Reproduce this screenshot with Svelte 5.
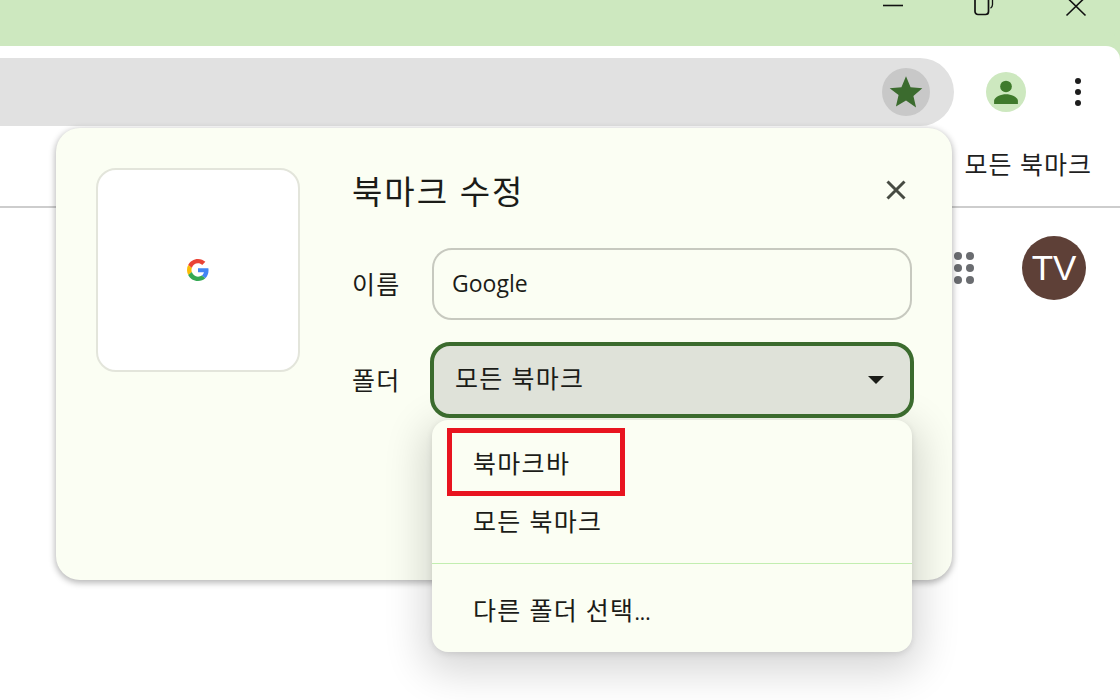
<script>
  let title = '북마크 수정';
  let name = 'Google';
  let folder = '모든 북마크';
</script>

<div class="window">
  <div class="titlebar">
    <svg class="winctl min" width="20" height="10" viewBox="0 0 20 10"><path d="M0 5.500h20" stroke="#111" stroke-width="1.600" /></svg>
    <svg class="winctl restore" width="20" height="16" viewBox="0 0 20 16"><rect x="1" y="-3" width="13.500" height="17.500" rx="3" fill="none" stroke="#111" stroke-width="1.700" /><path d="M18.500 -1v5.500c0 1.800-.8 3-2 3.700" fill="none" stroke="#111" stroke-width="1.300" /></svg>
    <svg class="winctl close" width="20" height="16" viewBox="0 0 20 16"><path d="M0.500 15.500L19.500 -3M0.500 -3L19.500 15.500" stroke="#111" stroke-width="1.600" /></svg>
  </div>

  <div class="toolbar">
    <div class="omnibox">
      <span class="star-btn">
        <svg width="40" height="40" viewBox="0 0 24 24"><path d="M12 2.600l2.750 6.500 7.050.6-5.350 4.650 1.600 6.900L12 17.050 5.950 20.750l1.600-6.900L2.200 9.700l7.050-.6z" fill="#3b6b2e" /></svg>
      </span>
    </div>
    <span class="profile">
      <svg width="26" height="26" viewBox="0 0 24 24"><circle cx="12" cy="6.900" r="5.400" fill="#3f7a2c" /><path d="M1 23v-3c0-3.500 6.600-6 11-6s11 2.500 11 6v3z" fill="#3f7a2c" /></svg>
    </span>
    <span class="kebab"><i></i><i></i><i></i></span>
  </div>

  <div class="bookmarks">
    <span class="all">모든 북마크</span>
  </div>

  <div class="page">
    <span class="apps">
      {#each Array(9) as _}
        <i></i>
      {/each}
    </span>
    <span class="avatar">TV</span>
  </div>

  <div class="dialog">
    <div class="preview">
      <svg width="22" height="22" viewBox="0 0 48 48">
        <path fill="#EA4335" d="M24 9.500c3.540 0 6.710 1.220 9.210 3.600l6.850-6.850C35.900 2.380 30.470 0 24 0 14.620 0 6.510 5.380 2.560 13.220l7.980 6.190C12.430 13.720 17.740 9.500 24 9.500z" />
        <path fill="#4285F4" d="M46.980 24.550c0-1.570-.15-3.090-.38-4.550H24v9.020h12.940c-.58 2.960-2.260 5.480-4.780 7.180l7.730 6c4.510-4.180 7.090-10.360 7.090-17.650z" />
        <path fill="#FBBC05" d="M10.530 28.590c-.48-1.450-.76-2.990-.76-4.590s.27-3.140.76-4.590l-7.980-6.190C.92 16.460 0 20.120 0 24c0 3.880.92 7.540 2.560 10.780l7.970-6.190z" />
        <path fill="#34A853" d="M24 48c6.480 0 11.930-2.130 15.890-5.810l-7.730-6c-2.150 1.450-4.920 2.300-8.160 2.300-6.260 0-11.570-4.220-13.470-9.910l-7.980 6.190C6.510 42.620 14.620 48 24 48z" />
      </svg>
    </div>
    <div class="form">
      <div class="head">
        <h2>{title}</h2>
        <svg class="x" width="22" height="22" viewBox="0 0 22 22"><path d="M2.500 2.500l17 17M19.500 2.500l-17 17" stroke="#474b42" stroke-width="3" /></svg>
      </div>
      <div class="row name-row">
        <span class="label">이름</span>
        <div class="input">{name}</div>
      </div>
      <div class="row">
        <span class="label">폴더</span>
        <div class="select">
          <span class="value">{folder}</span>
          <svg width="16" height="8" viewBox="0 0 16 8"><path d="M0 0h16L8 8z" fill="#1b1c18" /></svg>
        </div>
      </div>
    </div>
  </div>

  <div class="menu">
    <div class="item first">북마크바</div>
    <div class="item">모든 북마크</div>
    <div class="sep"></div>
    <div class="item last">다른 폴더 선택<span class="dots">...</span></div>
  </div>
  <div class="highlight"></div>
</div>

<style>
  :global(body) {
    margin: 0;
    background: #fff;
  }

  .window {
    position: relative;
    width: 1120px;
    height: 700px;
    overflow: hidden;
    display: flex;
    flex-direction: column;
    background: #fff;
    font-family: "Noto Sans", "Noto Sans CJK KR", sans-serif;
    color: #1b1c18;
  }

  .titlebar {
    height: 46px;
    flex: none;
    background: #cde8bf;
    display: flex;
    align-items: flex-start;
    overflow: hidden;
  }

  .winctl {
    display: block;
    overflow: visible;
  }

  .min {
    margin: 0 0 0 883px;
  }

  .restore {
    margin-left: 71px;
  }

  .close {
    margin-left: 72px;
  }

  .toolbar {
    height: 80px;
    flex: none;
    background: #fff;
    border-top-right-radius: 14px;
    display: flex;
    align-items: flex-start;
    box-shadow: 0 -14px 0 0 #cde8bf;
  }

  .omnibox {
    width: 994px;
    height: 68px;
    margin: 12px 0 0 -40px;
    flex: none;
    background: #e1e1e1;
    border-radius: 34px;
    display: flex;
    align-items: center;
    justify-content: flex-end;
    padding-right: 24px;
    box-sizing: border-box;
  }

  .star-btn {
    width: 48px;
    height: 48px;
    border-radius: 50%;
    background: #c8c8c8;
    display: flex;
    align-items: center;
    justify-content: center;
  }

  .profile {
    width: 40px;
    height: 40px;
    margin: 26px 0 0 32px;
    border-radius: 50%;
    background: #cde8bf;
    display: flex;
    align-items: center;
    justify-content: center;
  }

  .kebab {
    display: flex;
    flex-direction: column;
    gap: 5px;
    margin: 32px 0 0 49px;
  }

  .kebab i {
    width: 6px;
    height: 6px;
    border-radius: 50%;
    background: #1d1d1d;
  }

  .bookmarks {
    flex: none;
    height: 58px;
    border-bottom: 2px solid #cdcdcd;
    display: flex;
    justify-content: flex-end;
    padding: 22px 28px 0 0;
  }

  .all {
    font-size: 25px;
    letter-spacing: 1px;
    line-height: 32px;
    color: #1f1f1f;
  }

  .page {
    display: flex;
    align-items: center;
    justify-content: flex-end;
    padding: 28px 34px 0 0;
    gap: 48px;
  }

  .apps {
    display: grid;
    grid-template-columns: repeat(3, 8px);
    gap: 4px;
  }

  .apps i {
    width: 8px;
    height: 8px;
    border-radius: 50%;
    background: #6a6c70;
  }

  .avatar {
    width: 64px;
    height: 64px;
    border-radius: 50%;
    background: #5e4037;
    color: #fff;
    font-family: "Liberation Sans", sans-serif;
    font-size: 35px;
    line-height: 64px;
    text-align: center;
  }

  .dialog {
    position: absolute;
    left: 56px;
    top: 128px;
    width: 896px;
    height: 452px;
    box-sizing: border-box;
    padding: 40px 40px 0;
    display: flex;
    gap: 52px;
    background: #fbfef3;
    border-radius: 24px;
    box-shadow: 0 2px 6px 1px rgba(0, 0, 0, 0.28);
  }

  .preview {
    width: 204px;
    height: 204px;
    flex: none;
    box-sizing: border-box;
    background: #fff;
    border: 2px solid #e3e5db;
    border-radius: 20px;
    display: flex;
    align-items: center;
    justify-content: center;
  }

  .form {
    flex: 1;
    min-width: 0;
  }

  .head {
    display: flex;
    align-items: center;
    justify-content: space-between;
    padding-right: 5px;
    height: 44px;
    margin-bottom: 36px;
  }

  h2 {
    margin: 4px 0 0;
    font-size: 33px;
    font-weight: 400;
    letter-spacing: 2px;
    line-height: 40px;
    color: #1b1c18;
  }

  .row {
    display: flex;
    align-items: center;
  }

  .name-row {
    margin-bottom: 22px;
  }

  .label {
    width: 80px;
    flex: none;
    font-size: 25px;
    letter-spacing: 1.200px;
    line-height: 30px;
  }

  .input {
    width: 480px;
    height: 72px;
    flex: none;
    box-sizing: border-box;
    border: 2px solid #c7c9bf;
    border-radius: 20px;
    padding-left: 18px;
    font-family: "Open Sans", "Noto Sans", sans-serif;
    font-size: 23px;
    line-height: 66px;
  }

  .select {
    position: relative;
    z-index: 2;
    width: 484px;
    height: 76px;
    flex: none;
    margin-left: -2px;
    box-sizing: border-box;
    border: 4px solid #3b6b2e;
    border-radius: 20px;
    padding: 0 26px 0 21px;
    background: #dfe2d9;
    display: flex;
    align-items: center;
    justify-content: space-between;
  }

  .value {
    font-size: 25px;
    letter-spacing: 1.300px;
    line-height: 30px;
    margin-top: -4px;
  }

  .menu {
    position: absolute;
    left: 432px;
    top: 420px;
    width: 480px;
    height: 232px;
    box-sizing: border-box;
    padding-top: 14px;
    background: #fbfef3;
    border-radius: 16px;
    box-shadow: 0 12px 40px 8px rgba(0, 0, 0, 0.16), 0 2px 6px rgba(0, 0, 0, 0.1);
  }

  .item {
    height: 58px;
    padding-left: 41px;
    font-size: 25px;
    letter-spacing: 1.300px;
    line-height: 58px;
  }

  .sep {
    height: 1px;
    margin-top: 13px;
    background: #c2eeb0;
  }

  .item.last {
    margin-top: 17px;
  }

  .dots {
    font-size: 20px;
    letter-spacing: 0;
  }

  .highlight {
    position: absolute;
    left: 447px;
    top: 428px;
    width: 178px;
    height: 68px;
    box-sizing: border-box;
    border: 5px solid #e8141f;
  }
</style>
